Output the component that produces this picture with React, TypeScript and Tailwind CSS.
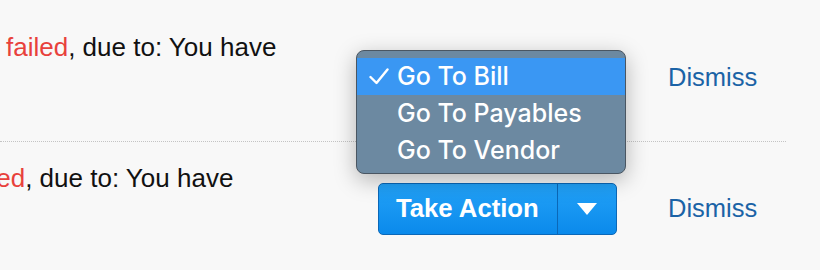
import React from "react";

function TakeAction() {
  return (
    <div className="flex h-[52px] w-[239px] shrink-0 overflow-hidden rounded-[5px] border border-[#0b68b8] bg-gradient-to-b from-[#22a2f8] to-[#0a8aeb] text-white">
      <div className="flex w-[178px] items-center pl-[17px] text-[25.7px] font-bold leading-none">
        Take Action
      </div>
      <div className="flex flex-1 items-center justify-center border-l border-[#0b68b8]">
        <svg width="20" height="12" viewBox="0 0 20 12">
          <path d="M0 0 H20 L10 12 Z" fill="#ffffff" />
        </svg>
      </div>
    </div>
  );
}

function Row({ offset, last }: { offset: string; last?: boolean }) {
  return (
    <div
      className={
        "flex h-[131px] w-[786px] items-start " +
        (last ? "" : "border-b border-dotted border-[#c4c4c4]")
      }
    >
      <div className="w-[378px] shrink-0 overflow-hidden pt-[21px]">
        <div
          className={"whitespace-nowrap text-[26px] leading-[30px] text-[#111111] " + offset}
        >
          <span className="text-[#e8413c]">failed</span>, due to: You have
        </div>
      </div>
      <div className="flex items-center pt-[41px]">
        <TakeAction />
        <div className="mb-[2px] ml-[51px] text-[25.5px] leading-[30px] text-[#1b63a6]">Dismiss</div>
      </div>
    </div>
  );
}

export default function App() {
  const items = ["Go To Bill", "Go To Payables", "Go To Vendor"];
  return (
    <div
      className="relative h-[270px] w-[820px] overflow-hidden bg-[#f8f8f8] pt-[11px]"
      style={{ fontFamily: '"Liberation Sans", Arial, Helvetica, sans-serif' }}
    >
      <Row offset="ml-[6px]" />
      <Row offset="ml-[-37px]" last />
      <div
        className="absolute left-[356px] top-[50px] h-[124px] w-[270px] rounded-[8px] border border-[#4a5662] bg-[#6c89a1] pt-[7px] text-white shadow-[0_6px_22px_rgba(0,0,0,0.28)]"
        style={{ fontFamily: 'Inter, Roboto, "Liberation Sans", Arial, sans-serif' }}
      >
        {items.map((t, i) => (
          <div
            key={t}
            className={
              "flex h-[37px] items-center text-[25px] font-medium leading-none " +
              (i === 0 ? "bg-[#3a97f3]" : "")
            }
          >
            <span className="flex w-[40px] items-center pl-[12px]">
              {i === 0 ? (
                <svg width="20" height="17" viewBox="0 0 20 17">
                  <path
                    d="M1.5 9 L7.5 15 L18.5 1.5"
                    fill="none"
                    stroke="#ffffff"
                    strokeWidth="2.4"
                    strokeLinecap="round"
                    strokeLinejoin="round"
                  />
                </svg>
              ) : null}
            </span>
            <span>{t}</span>
          </div>
        ))}
      </div>
    </div>
  );
}
